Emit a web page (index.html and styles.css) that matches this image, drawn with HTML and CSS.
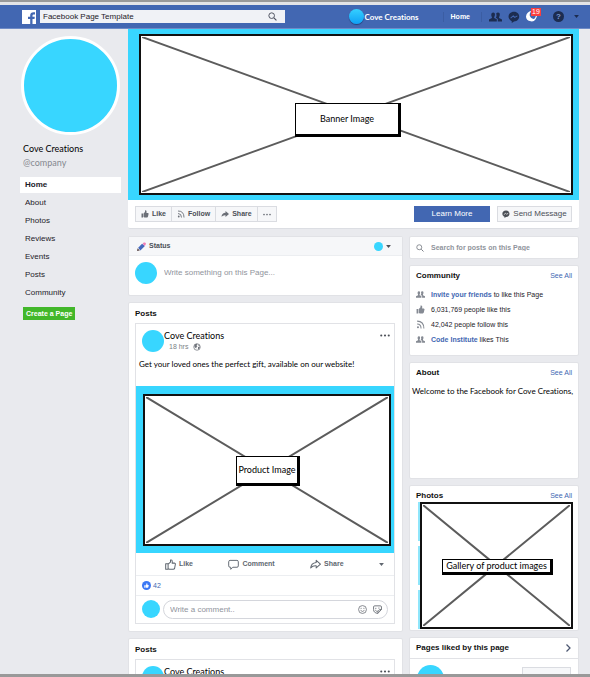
FILE: index.html
```html
<!DOCTYPE html>
<html lang="en">
<head>
<meta charset="utf-8">
<meta name="viewport" content="width=device-width, initial-scale=1">
<title>Cove Creations</title>
<link rel="stylesheet" href="styles.css">
</head>
<body>
<svg class="defs" aria-hidden="true">
  <symbol id="thumb" viewBox="0 0 16 16"><path d="M1 7h3v8H1zM5 7l3-3V1q2-1 3 1v4h3q2 1 1 2.500L14 13q-.5 2-2 2H7l-2-1z" fill="currentColor"/></symbol>
  <symbol id="thumb-line" viewBox="0 0 16 16"><path d="M1 7h3.500v8H1zM4.500 7.500 8 4.500V1.500q2.500-.5 2.500 2V6H14q1.500.5 1 2l-1 5.500q-.5 1.500-2 1.500H6.500l-2-1" fill="none" stroke="currentColor" stroke-width="1.500" stroke-linejoin="round"/></symbol>
  <symbol id="rss" viewBox="0 0 16 16"><path d="M2 2q12 0 12 13M2 7q7 0 7 8" fill="none" stroke="currentColor" stroke-width="1.800"/><circle cx="3.500" cy="13" r="1.800" fill="currentColor"/></symbol>
  <symbol id="share" viewBox="0 0 16 16"><path d="M9 2l7 6-7 6v-3.500Q4 10 1 13.500 1.500 6 9 5.500z" fill="currentColor"/></symbol>
  <symbol id="share-line" viewBox="0 0 16 16"><path d="M9 2l6.200 5.500L9 13v-3Q4 9.500 1 13 1.500 6 9 5z" fill="none" stroke="currentColor" stroke-width="1.500" stroke-linejoin="round"/></symbol>
  <symbol id="search" viewBox="0 0 16 16"><circle cx="6.500" cy="6.500" r="5" fill="none" stroke="currentColor" stroke-width="1.700"/><path d="m10.500 10.500 4.500 4.500" stroke="currentColor" stroke-width="2"/></symbol>
  <symbol id="people" viewBox="0 0 20 16"><path d="M6.500 1C10 1 9.500 6 8 8v1.500l4 2V15H0v-3l4.500-2.500V8C3 6 3 1 6.500 1zM14 1c3.500 0 3 5 1.500 7v1.500L20 12v3h-6.500v-4l-3-2 1-2Q12 5 11 2.500 12 1 14 1z" fill="currentColor"/></symbol>
  <symbol id="messenger" viewBox="0 0 16 16"><path d="M8 1c9 0 9.500 12.500 0 13L5 16v-2.500C-2 10.500 0 1 8 1z" fill="currentColor"/><path d="m3.500 9.500 3.500-3 2 2 3.500-2" fill="none" stroke="var(--bolt)" stroke-width="1.400"/></symbol>
  <symbol id="globe" viewBox="0 0 16 16"><circle cx="8" cy="8" r="6.500" fill="none" stroke="currentColor" stroke-width="1.500"/><path d="M3 3.500Q6 1 9 2L7 4.500l2 2L7 8l-.5 3L3 8zM10 8l4-1q0 4-4 6.500zM11 2.500l3 3-3 .5z" fill="currentColor"/></symbol>
  <symbol id="globe-solid" viewBox="0 0 16 16"><path d="M8 0Q4 4 6 8t8 4Q11 16 7 15 0 14 0 8 1 1 8 0z" fill="currentColor"/><path d="M8 1q7 0 7 7-1 4-4 5" fill="none" stroke="currentColor" stroke-width="1.500"/></symbol>
  <symbol id="bubble" viewBox="0 0 16 16"><path d="M3 2h10q2 0 2 2v6q0 2-2 2H7l-3 3v-3H3q-2 0-2-2V4q0-2 2-2z" fill="none" stroke="currentColor" stroke-width="1.400" stroke-linejoin="round"/></symbol>
  <symbol id="caret" viewBox="0 0 8 5"><path d="M0 0h8L4 5z" fill="currentColor"/></symbol>
  <symbol id="dots" viewBox="0 0 16 4"><g fill="currentColor"><circle cx="2" cy="2" r="1.700"/><circle cx="8" cy="2" r="1.700"/><circle cx="14" cy="2" r="1.700"/></g></symbol>
  <symbol id="cross" viewBox="0 0 100 100" preserveAspectRatio="none"><path d="M0 0 100 100M100 0 0 100" fill="none" stroke="#5c5c5c" stroke-width="2" vector-effect="non-scaling-stroke"/></symbol>
</svg>

<header class="topbar">
  <a class="logo" href="#" aria-label="Facebook"><svg viewBox="0 0 14 14"><path d="M14 0v14h-3.500V9h2l.3-2.200h-2.300V5.500q0-1.100 1.200-1.100H13V2.300Q8.300 1.500 8.200 5.200v1.600H6V9h2.200v5H0V0z" fill="#fff"/></svg></a>
  <form class="topsearch">
    <input type="text" aria-label="Search Facebook" value="Facebook Page Template">
    <button type="button" aria-label="Search"><svg class="i9"><use href="#search"/></svg></button>
  </form>
  <a class="profile" href="#"><span class="orb"></span>Cove Creations</a>
  <a class="home" href="#">Home</a>
  <nav class="tools" aria-label="Account">
    <button type="button" aria-label="Friend requests"><svg class="i13"><use href="#people"/></svg></button>
    <button type="button" aria-label="Messages"><svg class="i12"><use href="#messenger"/></svg></button>
    <button type="button" class="alerts" aria-label="Notifications"><svg class="i11"><use href="#globe-solid"/></svg><span class="badge">19</span></button>
    <button type="button" class="help" aria-label="Help">?</button>
    <button type="button" aria-label="Menu"><svg class="caret"><use href="#caret"/></svg></button>
  </nav>
</header>

<div class="page">
  <aside class="side">
    <div class="avatar portrait"></div>
    <h1 class="sketch">Cove Creations</h1>
    <p class="sketch handle">@company</p>
    <nav class="sections" aria-label="Page sections">
      <a class="current" href="#">Home</a>
      <a href="#">About</a>
      <a href="#">Photos</a>
      <a href="#">Reviews</a>
      <a href="#">Events</a>
      <a href="#">Posts</a>
      <a href="#">Community</a>
    </nav>
    <button type="button" class="create">Create a Page</button>
  </aside>

  <main class="main">
    <section class="cover">
      <div class="banner">
        <div class="picture wide"><svg><use href="#cross"/></svg><span class="sketch label">Banner Image</span></div>
      </div>
      <div class="actions">
        <div class="group">
          <button type="button"><svg class="i8"><use href="#thumb"/></svg>Like</button>
          <button type="button"><svg class="i8"><use href="#rss"/></svg>Follow</button>
          <button type="button"><svg class="i8"><use href="#share"/></svg>Share</button>
          <button type="button" aria-label="More"><svg class="dots small"><use href="#dots"/></svg></button>
        </div>
        <button type="button" class="learn">Learn More</button>
        <button type="button" class="send"><svg class="i8"><use href="#messenger"/></svg>Send Message</button>
      </div>
    </section>

    <div class="columns">
      <div class="feed">
        <section class="card">
          <div class="status-head">
            <svg class="i9" viewBox="0 0 16 16"><path d="M0 16l1-5 4 4z" fill="#5b4a4a"/><path d="M2 10 9 3l5 4-8 8z" fill="#4468bd"/><path d="m10 3 2-2q3-1 4 2l-2 4z" fill="#ee7db5"/></svg>
            <h2>Status</h2>
            <span class="avatar dot"></span>
            <svg class="caret"><use href="#caret"/></svg>
          </div>
          <div class="status-body">
            <span class="avatar medium"></span>
            <input type="text" aria-label="Status" placeholder="Write something on this Page...">
          </div>
        </section>

        <section class="card posts">
          <h2>Posts</h2>
          <article class="post">
            <header class="post-head">
              <span class="avatar medium"></span>
              <div class="author">
                <h3 class="sketch">Cove Creations</h3>
                <p>18 hrs <svg class="i8"><use href="#globe"/></svg></p>
              </div>
              <button type="button" aria-label="Post options"><svg class="dots"><use href="#dots"/></svg></button>
            </header>
            <p class="sketch message">Get your loved ones the perfect gift, available on our website!</p>
            <div class="product">
              <div class="picture tall"><svg><use href="#cross"/></svg><span class="sketch label">Product Image</span></div>
            </div>
            <div class="reactions">
              <button type="button"><svg class="i11"><use href="#thumb-line"/></svg>Like</button>
              <button type="button"><svg class="i11"><use href="#bubble"/></svg>Comment</button>
              <button type="button"><svg class="i11"><use href="#share-line"/></svg>Share</button>
              <button type="button" aria-label="More"><svg class="caret"><use href="#caret"/></svg></button>
            </div>
            <p class="likes"><span class="like-mark"><svg><use href="#thumb"/></svg></span>42</p>
            <div class="comment">
              <span class="avatar small"></span>
              <div class="bubble">
                <input type="text" aria-label="Comment" placeholder="Write a comment..">
                <button type="button" aria-label="Emoji"><svg class="i9" viewBox="0 0 16 16" fill="none" stroke="currentColor" stroke-width="1.400"><circle cx="8" cy="8" r="7"/><path d="M4.500 9.500q3.500 4 7 0M5.500 5v2M10.500 5v2"/></svg></button>
                <button type="button" aria-label="Sticker"><svg class="i9" viewBox="0 0 16 16" fill="none" stroke="currentColor" stroke-width="1.600" stroke-linejoin="round"><path d="M3 1.500h10q2 0 2 2V8l-6.500 7Q1 14 1 8V3.500q0-2 2-2zM15 8q-6-1-6.500 7M4 9q2 3 5 2M5 5v2M10.500 4.500v2"/></svg></button>
              </div>
            </div>
          </article>
        </section>

        <section class="card posts">
          <h2>Posts</h2>
          <article class="post">
            <header class="post-head">
              <span class="avatar medium"></span>
              <div class="author">
                <h3 class="sketch">Cove Creations</h3>
              </div>
              <button type="button" aria-label="Post options"><svg class="dots"><use href="#dots"/></svg></button>
            </header>
          </article>
        </section>
      </div>

      <div class="rail">
        <form class="card find">
          <svg class="i8"><use href="#search"/></svg>
          <input type="search" aria-label="Search posts" placeholder="Search for posts on this Page">
        </form>

        <section class="card community">
          <div class="card-head"><h2>Community</h2><a href="#">See All</a></div>
          <ul>
            <li><svg class="i9"><use href="#people"/></svg><span><a href="#">Invite your friends</a> to like this Page</span></li>
            <li><svg class="i9"><use href="#thumb"/></svg><span>6,031,769 people like this</span></li>
            <li><svg class="i9"><use href="#rss"/></svg><span>42,042 people follow this</span></li>
            <li><svg class="i9"><use href="#people"/></svg><span><a href="#">Code Institute</a> likes This</span></li>
          </ul>
        </section>

        <section class="card about">
          <div class="card-head"><h2>About</h2><a href="#">See All</a></div>
          <p class="sketch">Welcome to the Facebook for Cove Creations,</p>
        </section>

        <section class="card photos">
          <div class="card-head"><h2>Photos</h2><a href="#">See All</a></div>
          <div class="gallery">
            <div class="strips"><i></i><i></i><i></i></div>
            <div class="picture"><svg><use href="#cross"/></svg><span class="sketch label">Gallery of product images</span></div>
          </div>
        </section>

        <section class="card liked">
          <div class="card-head"><h2>Pages liked by this page</h2><svg class="i8" viewBox="0 0 16 16"><path d="m5 1 7 7-7 7" fill="none" stroke="#4b5670" stroke-width="2.500"/></svg></div>
          <div class="liked-row"><span class="avatar large"></span><button type="button" aria-label="Like page"></button></div>
        </section>
      </div>
    </div>
  </main>
</div>
</body>
</html>
```
FILE: styles.css
```css
:root {
  --blue: #4267b2;
  --cyan: #38d6ff;
  --line: #e1e2e6;
  --grey: #606770;
  --bolt: #fff;
}

* { box-sizing: border-box; margin: 0; padding: 0; }

body {
  display: flex;
  flex-direction: column;
  height: 100vh;
  overflow: hidden;
  border-top: 2px solid #999;
  border-bottom: 3px solid #999;
  background: #e9eaee;
  color: #1d2129;
  font: 8px/10px "Liberation Sans", Arial, sans-serif;
}

a { color: var(--blue); text-decoration: none; }
button, input { border: 0; background: none; font: inherit; color: inherit; min-width: 0; }
input { outline: 0; }
input::placeholder { color: #90949c; opacity: 1; }
ul { list-style: none; }
h2 { font-size: 8px; color: #111; }
svg { display: block; flex: none; }

.defs { position: absolute; width: 0; height: 0; }
.sketch { font: 400 9px/12px Lato, sans-serif; font-variant-ligatures: none; color: #000; }
.i8 { width: 8px; height: 8px; }
.i9 { width: 9px; height: 9px; }
.i11 { width: 11px; height: 11px; }
.i12 { width: 12px; height: 12px; }
.i13 { width: 13px; height: 12px; }
.caret { width: 5px; height: 3px; }
.dots { width: 10px; height: 3px; }
.dots.small { width: 8px; }

.avatar { flex: none; border-radius: 50%; background: var(--cyan); }
.avatar.dot { width: 9px; height: 9px; }
.avatar.small { width: 18px; height: 18px; }
.avatar.medium { width: 22px; height: 22px; }
.avatar.large { width: 27px; height: 27px; }

/* Top bar */
.topbar {
  flex: none;
  display: flex;
  align-items: center;
  height: 27px;
  padding: 0 11px 0 22px;
  border-top: 3px solid #e4e4e6;
  border-bottom: 1px solid #6f8bc6;
  background: var(--blue);
  color: #fff;
}
.logo svg { width: 14px; height: 14px; }
.topsearch {
  flex: 1;
  display: flex;
  align-items: center;
  max-width: 245px;
  height: 13px;
  margin-left: 4px;
  padding: 0 8px 0 3px;
  background: #f0f2f6;
  color: #1d2129;
}
.topsearch input { flex: 1; }
.topsearch button { color: #4b4f5c; }
.profile {
  display: flex;
  align-items: center;
  gap: 1px;
  margin-left: auto;
  color: #fff;
  font: 700 8px/12px Lato, sans-serif;
  font-variant-ligatures: none;
}
.orb {
  width: 15px;
  height: 15px;
  border-radius: 50%;
  background: linear-gradient(#35d0ff, #0fa0f5);
  box-shadow: 0 1px 1px #24417d;
}
.home {
  margin: 0 7px 0 24px;
  padding: 0 11px 0 7px;
  border-left: 1px solid #3b5da3;
  border-right: 1px solid #3b5da3;
  color: #fff;
  font-size: 7px;
  font-weight: 700;
}
.tools { display: flex; align-items: center; gap: 6px; color: #1c2c50; --bolt: var(--blue); }
.alerts { position: relative; color: #fff; }
.badge {
  position: absolute;
  top: -3px;
  left: 5px;
  padding: 0 1px;
  background: #fa3e3e;
  color: #fff;
  font-size: 7px;
  line-height: 8px;
}
.help {
  width: 11px;
  height: 11px;
  margin: 0 4px 0 10px;
  border-radius: 50%;
  background: #1c2c50;
  color: #7f9ad0;
  font-weight: 700;
}

/* Page frame */
.page {
  flex: 1;
  min-height: 0;
  display: grid;
  grid-template-columns: 101px minmax(0, 1fr);
  gap: 7px;
  padding: 0 11px 0 20px;
  overflow: hidden;
}

.side { padding-top: 7px; }
.portrait {
  width: 99px;
  height: 99px;
  margin: 0 0 7px 1px;
  border: 3px solid #fff;
}
.side .sketch { margin-left: 3px; line-height: 14px; }
.side .handle { color: #85888f; }
.sections { display: grid; gap: 2px; margin-top: 7px; }
.sections a { padding: 0 5px; line-height: 16px; color: #1d2129; }
.sections .current { background: #fff; font-weight: 700; }
.create {
  height: 13px;
  margin: 6px 0 0 3px;
  padding: 0 3px;
  background: #42b72a;
  color: #fff;
  font-size: 7px;
  font-weight: 700;
}

/* Image placeholders */
.picture {
  display: grid;
  place-items: center;
  border: 2px solid #111;
  background: #fff;
}
.picture > * { grid-area: 1 / 1; }
.picture svg { width: 100%; height: 100%; padding: 1px; }
.picture .label {
  padding: 0 3px;
  border: 1px solid #000;
  background: #fff;
  box-shadow: 1px 1px 0 1px #000;
  white-space: nowrap;
}

.cover { background: #fff; border-radius: 0 0 2px 2px; border-bottom: 1px solid #dcdee3; }
.banner { padding: 5px 6px 5px 11px; background: var(--cyan); }
.wide { height: 161px; }
.wide .label { margin: 9px 18px 0 0; padding: 9px 24px; }
.actions {
  display: flex;
  align-items: center;
  gap: 7px;
  padding: 6px 7px;
}
.group { display: flex; margin-right: auto; border: 1px solid #dadce1; background: #f6f7f9; }
.group button {
  display: flex;
  align-items: center;
  gap: 3px;
  height: 14px;
  padding: 0 5px;
  color: #4b4f56;
  font-size: 7px;
  font-weight: 700;
}
.group button + button { border-left: 1px solid #dadce1; }
.group svg { color: #6b6f77; }
.learn { width: 76px; height: 16px; background: var(--blue); color: #fff; }
.send {
  display: flex;
  align-items: center;
  justify-content: center;
  gap: 3px;
  width: 75px;
  height: 16px;
  border: 1px solid #dadce1;
  background: #f6f7f9;
  color: #4b4f56;
}

/* Cards */
.columns {
  display: grid;
  grid-template-columns: minmax(0, 275fr) minmax(0, 170fr);
  align-items: start;
  gap: 6px;
  margin-top: 7px;
}
.feed, .rail { display: grid; grid-template-columns: minmax(0, 1fr); gap: 6px; }
.card { border: 1px solid var(--line); border-radius: 2px; background: #fff; }
.card-head { display: flex; align-items: center; justify-content: space-between; padding: 5px 6px 0; }
.card-head a { font-size: 7px; }

.status-head {
  display: flex;
  align-items: center;
  height: 19px;
  padding: 0 11px 0 8px;
  border-bottom: 1px solid #eceef1;
  background: #f6f7f9;
  color: #4b4f56;
}
.status-head h2 { margin: 0 auto 0 3px; font-size: 7px; color: #4b4f56; }
.status-head .caret { margin-left: 3px; }
.status-body { display: flex; gap: 7px; padding: 6px 6px 11px; }
.status-body input { flex: 1; }

.posts { padding: 5px 7px 7px 6px; }
.posts h2 { line-height: 11px; }
.post { margin-top: 4px; border: 1px solid var(--line); }
.post-head { display: flex; padding: 6px 4px 0 6px; }
.author { flex: 1; }
.author p { display: flex; align-items: center; gap: 5px; padding-left: 5px; color: #7b7f87; font-size: 7px; line-height: 12px; }
.author .sketch { line-height: 11px; }
.author svg { color: #70747c; }
.post-head button { align-self: flex-start; padding-top: 4px; color: #4b4f56; }
.message { padding: 5px 3px 16px; font-size: 8px; white-space: nowrap; }
.product { padding: 8px 3px 7px 7px; background: var(--cyan); }
.tall { height: 152px; }
.tall .label { padding: 7px 1px; }

.reactions {
  display: flex;
  align-items: center;
  justify-content: space-between;
  height: 23px;
  padding: 0 10px 0 29px;
  border-bottom: 1px solid #eceef1;
}
.reactions button {
  display: flex;
  align-items: center;
  gap: 3px;
  color: var(--grey);
  font-size: 7px;
  font-weight: 700;
}
.likes {
  display: flex;
  align-items: center;
  gap: 2px;
  height: 20px;
  padding-left: 6px;
  border-bottom: 1px solid #eceef1;
  color: var(--blue);
  font-size: 7px;
}
.like-mark {
  display: grid;
  place-items: center;
  width: 9px;
  height: 9px;
  border-radius: 50%;
  background: #3b78f5;
  color: #fff;
}
.like-mark svg { width: 5px; height: 5px; }
.comment { display: flex; gap: 3px; padding: 4px 6px; }
.bubble {
  flex: 1;
  display: flex;
  align-items: center;
  gap: 6px;
  height: 19px;
  padding: 0 5px 0 6px;
  border: 1px solid #d4d6dc;
  border-radius: 10px;
  color: #686c74;
}
.bubble input { flex: 1; }

/* Right rail */
.find { display: flex; align-items: center; gap: 7px; height: 23px; padding: 0 6px; color: #7b7f87; }
.find input { flex: 1; font-size: 7px; font-weight: 700; }
.community ul { padding: 6px 6px 8px; }
.community li {
  display: flex;
  align-items: center;
  gap: 6px;
  line-height: 15px;
  font-size: 7px;
  white-space: nowrap;
}
.community li svg { color: #858a93; }
.community li a { font-weight: 700; }
.about { min-height: 117px; }
.about p { padding: 7px 2px; font-size: 8px; white-space: nowrap; }
.photos { padding-bottom: 1px; }
.gallery { display: flex; padding: 1px 5px 0 8px; }
.gallery .picture { flex: 1; height: 127px; }
.strips { display: grid; gap: 5px; width: 2px; }
.strips i { background: #8fe6fb; }
.liked .card-head { padding-bottom: 5px; border-bottom: 1px solid var(--line); }
.liked-row { display: flex; justify-content: space-between; padding: 6px 7px; }
.liked-row button { width: 49px; height: 14px; margin-top: 2px; border: 1px solid #dadce1; background: #f6f7f9; }
```
